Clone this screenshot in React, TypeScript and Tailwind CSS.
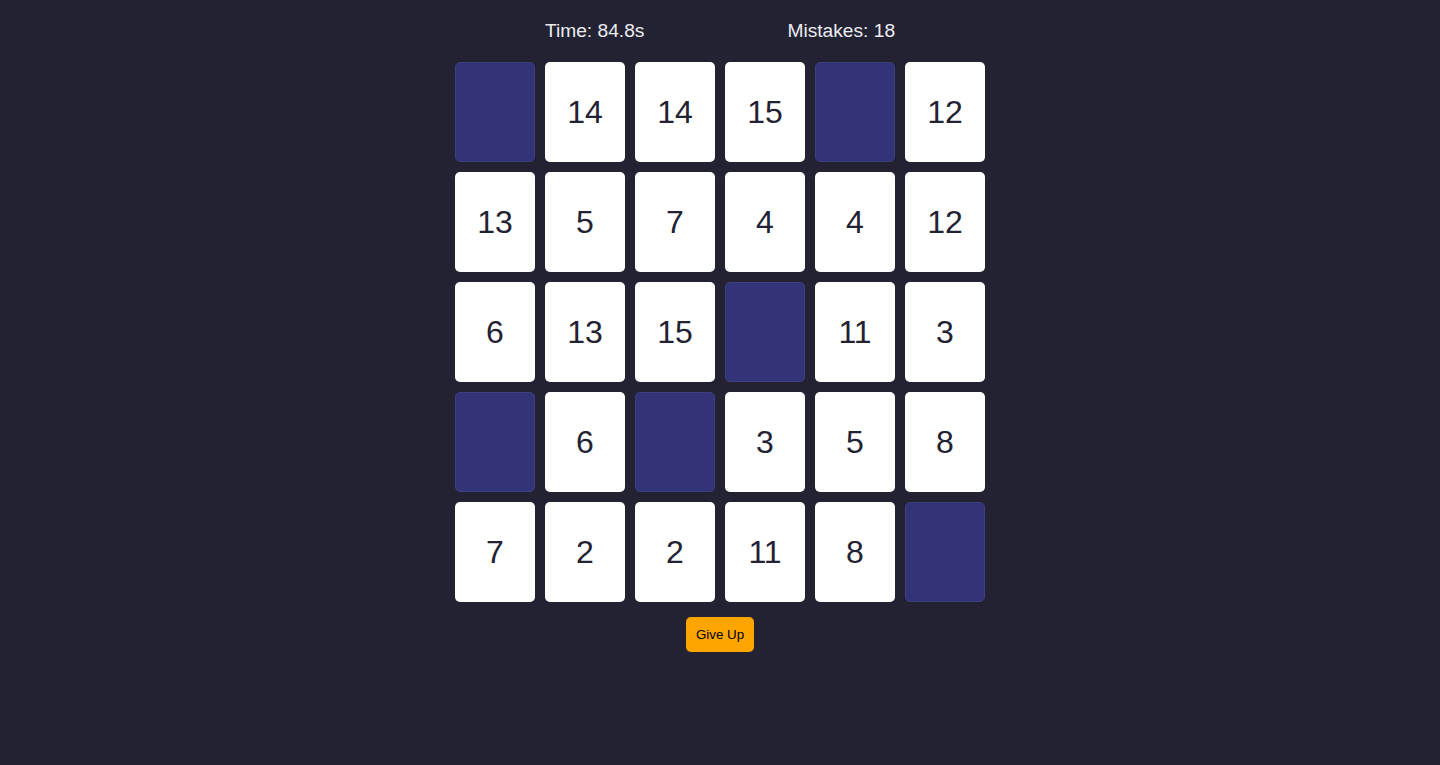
import React from "react";

const cells: (number | null)[] = [
  null, 14, 14, 15, null, 12,
  13, 5, 7, 4, 4, 12,
  6, 13, 15, null, 11, 3,
  null, 6, null, 3, 5, 8,
  7, 2, 2, 11, 8, null,
];

export default function App() {
  return (
    <div className="w-full min-h-[765px] bg-[#232233] flex flex-col items-center" style={{ fontFamily: '"Liberation Sans", Arial, sans-serif' }}>
      <div className="h-[62px] flex items-center justify-center gap-[143px] text-[19.2px] text-[#ececf0]">
        <span>Time: 84.8s</span>
        <span>Mistakes: 18</span>
      </div>
      <div className="grid grid-cols-[repeat(6,80px)] auto-rows-[100px] gap-[10px]">
        {cells.map((v, i) =>
          v === null ? (
            <div key={i} className="rounded-[5px] bg-[#333477] border border-[#3d3f80]" />
          ) : (
            <div key={i} className="rounded-[5px] bg-white flex items-center justify-center text-[32px] text-[#232233]">
              {v}
            </div>
          )
        )}
      </div>
      <button className="mt-[15px] h-[35px] px-[10px] rounded-[5px] bg-[#ffa500] text-black text-[13.33px]">
        Give Up
      </button>
    </div>
  );
}
